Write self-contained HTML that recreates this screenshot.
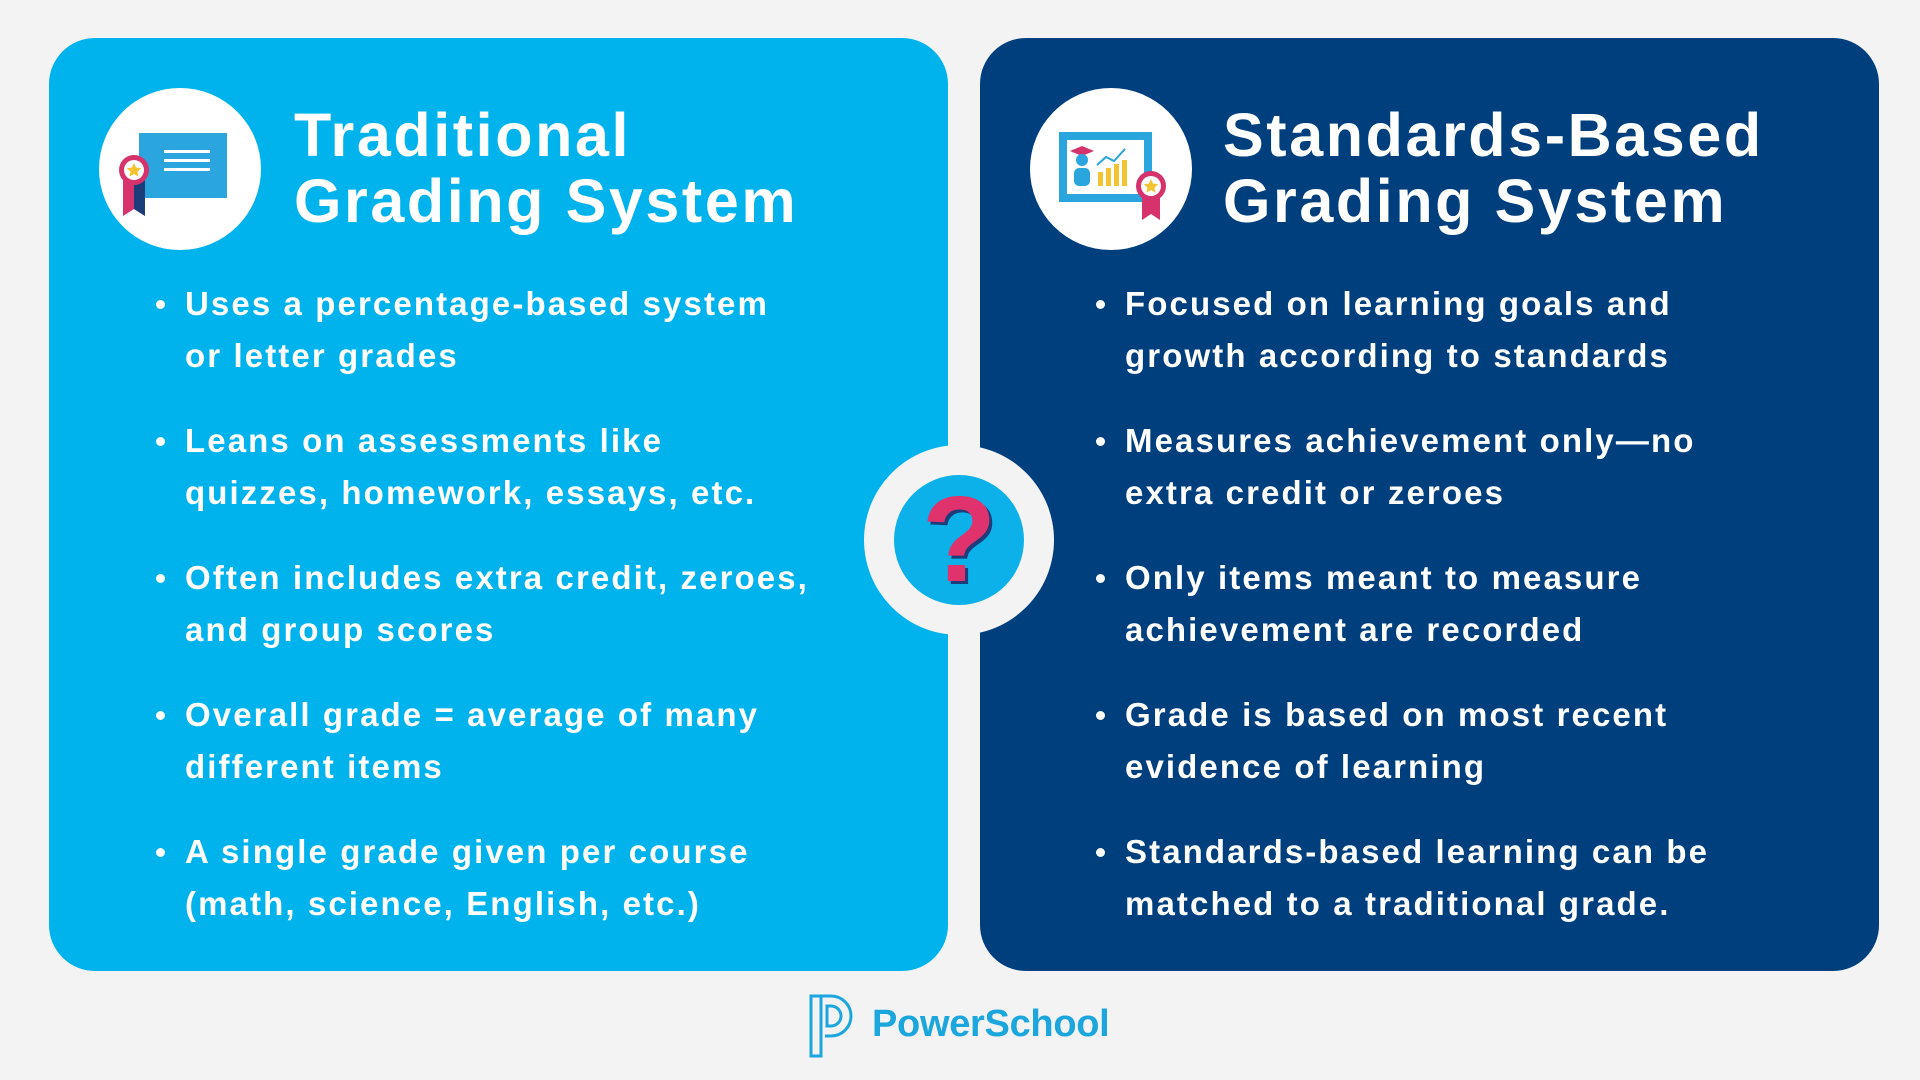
<!DOCTYPE html>
<html><head><style>
*{margin:0;padding:0;box-sizing:border-box}
body{width:1920px;height:1080px;background:#f3f3f3;position:relative;overflow:hidden;font-family:"Liberation Sans",sans-serif;color:#fff}
.card{position:absolute;top:38px;height:933px;width:899px;border-radius:46px}
.l{left:49px;background:#00b3ec}
.r{left:980px;background:#003f7e}
.ic{position:absolute;width:162px;height:162px;border-radius:50%;background:#fff;top:50px;left:50px}
h1{position:absolute;top:64px;font-size:61px;line-height:66px;font-weight:bold;letter-spacing:2.6px}
ul{position:absolute;top:240px;list-style:none}
li{position:relative;font-size:33px;line-height:52px;font-weight:bold;margin-bottom:33px;letter-spacing:2.1px;white-space:nowrap}
li:before{content:"";position:absolute;left:-29px;top:22px;width:9px;height:9px;border-radius:50%;background:#fff}
</style></head><body>
<div class="card l">
 <div class="ic"><svg width="162" height="162" viewBox="0 0 162 162">
  <rect x="40" y="45" width="88" height="65" fill="#2aa5dd"/>
  <rect x="65" y="62" width="46" height="3" fill="#fff"/><rect x="65" y="71" width="46" height="3" fill="#fff"/><rect x="65" y="80" width="46" height="3" fill="#fff"/>
  <path d="M24 92h22v36l-11-7-11 7z" fill="#d6336c"/><path d="M35 92h11v36l-11-7z" fill="#1c3d7a"/>
  <circle cx="35" cy="82" r="15" fill="#d6336c"/><circle cx="35" cy="82" r="10" fill="#fff"/>
  <path d="M35 75l2.2 4.6 5 .6-3.7 3.4 1 5-4.5-2.5-4.5 2.5 1-5-3.7-3.4 5-.6z" fill="#f4c430"/>
 </svg></div>
 <h1 style="left:245px">Traditional<br>Grading System</h1>
 <ul style="left:136px">
  <li>Uses a percentage-based system<br>or letter grades</li>
  <li>Leans on assessments like<br>quizzes, homework, essays, etc.</li>
  <li>Often includes extra credit, zeroes,<br>and group scores</li>
  <li>Overall grade = average of many<br>different items</li>
  <li>A single grade given per course<br>(math, science, English, etc.)</li>
 </ul>
</div>
<div class="card r">
 <div class="ic"><svg width="162" height="162" viewBox="0 0 162 162">
  <rect x="33" y="48" width="85" height="62" fill="#fff" stroke="#2aa5dd" stroke-width="8"/>
  <path d="M40 63l12-5 12 5-12 5z" fill="#d6336c"/>
  <circle cx="52" cy="72" r="6" fill="#2aa5dd"/><rect x="44" y="80" width="16" height="18" rx="5" fill="#2aa5dd"/>
  <rect x="68" y="84" width="5" height="14" fill="#f4c430"/><rect x="76" y="80" width="5" height="18" fill="#f4c430"/><rect x="84" y="76" width="5" height="22" fill="#f4c430"/><rect x="92" y="72" width="5" height="26" fill="#f4c430"/>
  <path d="M67 77l9-8 8 4 11-12" stroke="#2aa5dd" stroke-width="2" fill="none"/>
  <path d="M112 106h18v26l-9-6-9 6z" fill="#d6336c"/>
  <circle cx="121" cy="98" r="15" fill="#d6336c"/><circle cx="121" cy="98" r="10" fill="#fff"/>
  <path d="M121 91l2.2 4.6 5 .6-3.7 3.4 1 5-4.5-2.5-4.5 2.5 1-5-3.7-3.4 5-.6z" fill="#f4c430"/>
 </svg></div>
 <h1 style="left:243px">Standards-Based<br>Grading System</h1>
 <ul style="left:145px">
  <li>Focused on learning goals and<br>growth according to standards</li>
  <li>Measures achievement only—no<br>extra credit or zeroes</li>
  <li>Only items meant to measure<br>achievement are recorded</li>
  <li>Grade is based on most recent<br>evidence of learning</li>
  <li>Standards-based learning can be<br>matched to a traditional grade.</li>
 </ul>
</div>
<div style="position:absolute;left:864px;top:445px;width:190px;height:190px;border-radius:50%;background:#f3f3f3"></div>
<div style="position:absolute;left:894px;top:475px;width:130px;height:130px;border-radius:50%;background:#0bb1e8"></div>
<div style="position:absolute;left:894px;top:474px;width:130px;text-align:center;font-size:122px;font-weight:bold;line-height:130px;color:#e0336e;text-shadow:3px 3px 0 #1c3d7a">?</div>
<svg style="position:absolute;left:808px;top:993px" width="54" height="66" viewBox="0 0 54 66">
 <path d="M3 3v60h10V3z M13 3h10a20 20 0 0 1 0 40h-6" fill="none" stroke="#1ba6dd" stroke-width="3"/>
 <path d="M19 13h4a10 10 0 0 1 0 20h-4z" fill="none" stroke="#1ba6dd" stroke-width="3"/>
</svg>
<div style="position:absolute;left:872px;top:1003px;font-size:38px;font-weight:bold;color:#1ba6dd;letter-spacing:-0.3px">PowerSchool</div>
</body></html>
